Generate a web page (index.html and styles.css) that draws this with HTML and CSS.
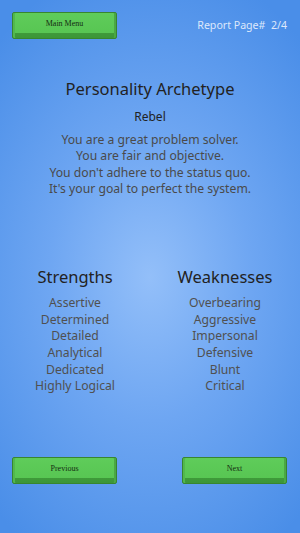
FILE: index.html
```html
<!DOCTYPE html>
<html lang="en">
<head>
    <meta charset="UTF-8">
    <meta name="viewport" content="width=device-width, initial-scale=1">
    <title>Report Page</title>
    <link rel="stylesheet" href="styles.css">
</head>
<body>

<div class="screen">
    <div class="top-bar">
        <button class="green-btn">Main Menu</button>
        <span class="page-no">Report Page#&nbsp; 2/4</span>
    </div>

    <div class="archetype">
        <h1>Personality Archetype</h1>
        <h2>Rebel</h2>
        <p>You are a great problem solver.<br>
           You are fair and objective.<br>
           You don't adhere to the status quo.<br>
           It's your goal to perfect the system.</p>
    </div>

    <div class="traits">
        <div class="trait-col">
            <h3>Strengths</h3>
            <ul>
                <li>Assertive</li>
                <li>Determined</li>
                <li>Detailed</li>
                <li>Analytical</li>
                <li>Dedicated</li>
                <li>Highly Logical</li>
            </ul>
        </div>
        <div class="trait-col">
            <h3>Weaknesses</h3>
            <ul>
                <li>Overbearing</li>
                <li>Aggressive</li>
                <li>Impersonal</li>
                <li>Defensive</li>
                <li>Blunt</li>
                <li>Critical</li>
            </ul>
        </div>
    </div>

    <div class="bottom-bar">
        <button class="green-btn">Previous</button>
        <button class="green-btn">Next</button>
    </div>
</div>

</body>
</html>
```

FILE: styles.css
```css
html, body {
    margin: 0;
    padding: 0;
    height: 100%;
}
body {
    font-family: "Noto Sans", "Open Sans", sans-serif;
    background: radial-gradient(ellipse 75% 60% at 50% 52%, #93bff9 0%, #6ea6f2 45%, #4a8ee8 100%);
    background-color: #4a8ee8;
}
.screen {
    display: flex;
    flex-direction: column;
    height: 533px;
    box-sizing: border-box;
    padding: 12px 12px 0;
}
.top-bar {
    display: flex;
    justify-content: space-between;
    align-items: center;
}
.page-no {
    color: #dde8fb;
    font-size: 10.6px;
    margin-right: 1px;
    margin-top: -2px;
}
.green-btn {
    width: 105px;
    height: 27px;
    padding: 0 0 4px;
    font-family: "Liberation Serif", serif;
    font-size: 8px;
    color: #152e12;
    background: linear-gradient(to bottom, #5fcc5a 0%, #58c653 78%, #3f9a3a 80%, #3c9637 100%);
    border: 1px solid #38862f;
    border-radius: 2px;
    box-shadow: inset -2px 0 0 #4aa844, inset 2px 0 0 #52b84d;
}
.archetype {
    text-align: center;
    margin-top: 38px;
}
.archetype h1 {
    font-size: 16.5px;
    font-weight: normal;
    color: #222;
    margin: 0 0 8px;
}
.archetype h2 {
    font-size: 12px;
    font-weight: normal;
    color: #222;
    margin: 0 0 7px;
}
.archetype p {
    font-size: 12.2px;
    line-height: 16.3px;
    color: #4a4a4a;
    margin: 0;
}
.traits {
    display: flex;
    justify-content: space-between;
    margin-top: 68px;
    padding: 0 0 0 0;
}
.trait-col {
    width: 126px;
    text-align: center;
}
.trait-col h3 {
    font-size: 16.5px;
    font-weight: normal;
    color: #222;
    margin: 0 0 7px;
}
.trait-col ul {
    list-style: none;
    margin: 0;
    padding: 0;
}
.trait-col li {
    font-size: 12.2px;
    line-height: 16.6px;
    color: #505050;
}
.bottom-bar {
    display: flex;
    justify-content: space-between;
    margin-top: auto;
    margin-bottom: 49px;
}
.bottom-bar .green-btn:last-child {
    margin-right: 1px;
}
```
